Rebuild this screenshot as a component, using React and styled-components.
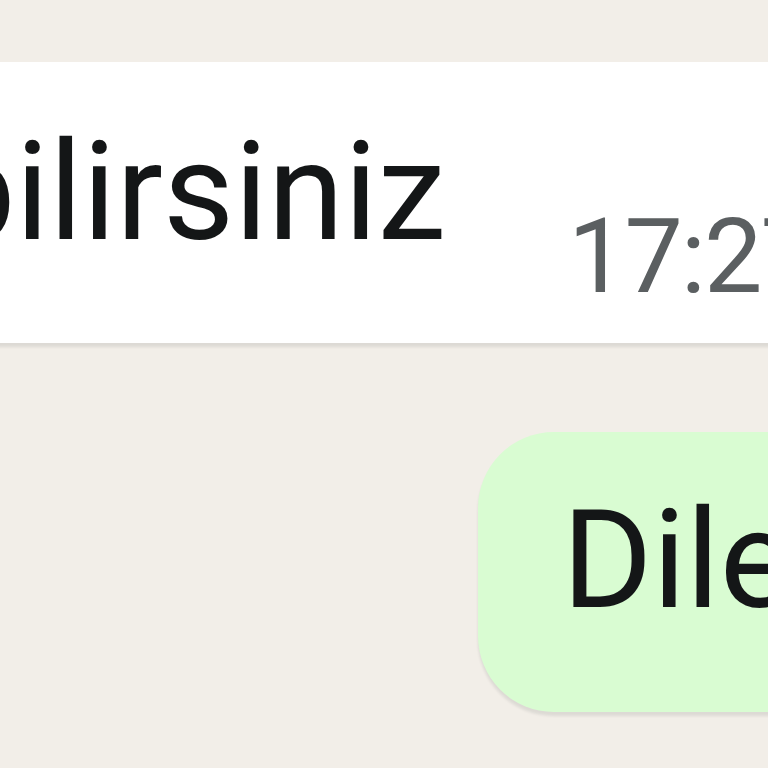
import React from "react";
import styled, { createGlobalStyle } from "styled-components";

const GlobalStyle = createGlobalStyle`
  html, body {
    margin: 0;
    padding: 0;
    background: #f2eee8;
  }
  body {
    font-family: Roboto, "Liberation Sans", sans-serif;
  }
`;

const Screen = styled.div`
  width: 768px;
  height: 768px;
  overflow: hidden;
  background: #f2eee8;
  display: flex;
  flex-direction: column;
  padding-top: 62px;
  box-sizing: border-box;
`;

const Bubble = styled.div`
  display: flex;
  align-items: flex-end;
  flex-shrink: 0;
  white-space: nowrap;
  box-sizing: border-box;
  border-radius: 76px;
  background: ${(p) => (p.$out ? "#d9fcd2" : "#ffffff")};
  box-shadow: 0 4px 3px rgba(11, 20, 26, 0.09);
  align-self: flex-start;
`;

const Incoming = styled(Bubble)`
  margin-left: -90px;
  width: 1200px;
  height: 281px;
  padding: 48px 0 34px 28px;
`;

const Outgoing = styled(Bubble)`
  margin-top: 89px;
  margin-left: 478px;
  width: 900px;
  height: 280px;
  padding: 46px 0 0 84px;
  align-items: flex-start;
`;

const MessageText = styled.span`
  font-size: 138px;
  line-height: 1.2;
  color: #141617;
  margin-bottom: ${(p) => p.$lift || 0}px;
`;

const Time = styled.span`
  font-size: 104px;
  line-height: 1;
  letter-spacing: -2px;
  color: #5b5f61;
  margin-left: 122px;
`;

export default function App() {
  return (
    <>
      <GlobalStyle />
      <Screen>
        <Incoming>
          <MessageText $lift={33}>bilirsiniz</MessageText>
          <Time>17:27</Time>
        </Incoming>
        <Outgoing $out>
          <MessageText>Dilerim</MessageText>
        </Outgoing>
      </Screen>
    </>
  );
}
